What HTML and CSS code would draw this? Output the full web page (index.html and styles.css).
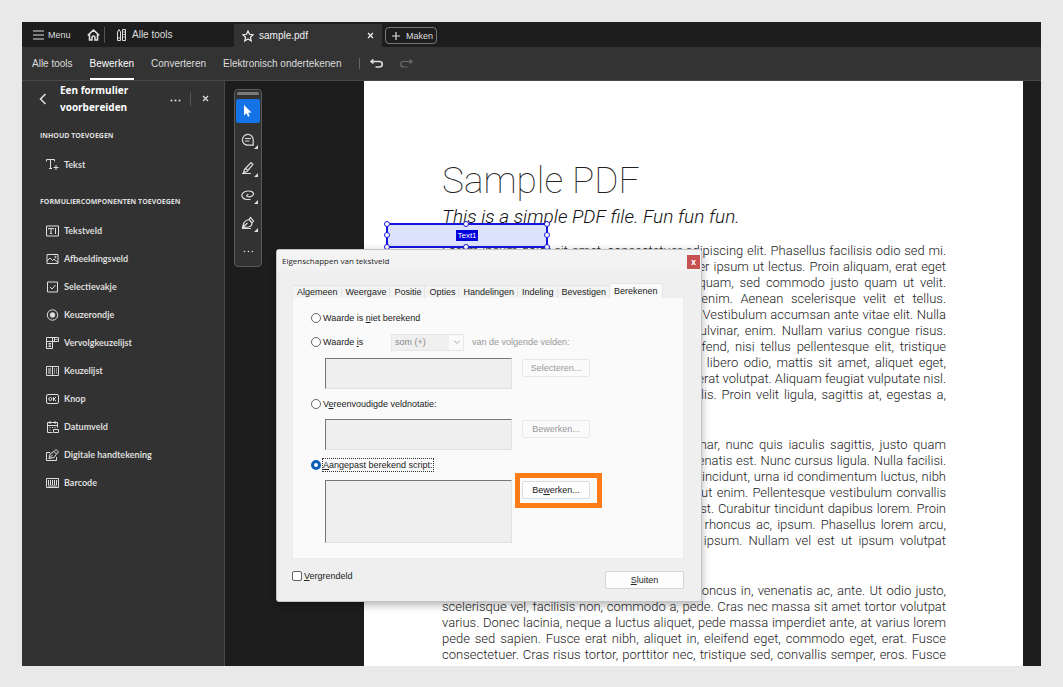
FILE: index.html
```
<!DOCTYPE html>
<html lang="nl">
    <head>
        <meta charset="utf-8">
        <title>sample.pdf</title>
        <meta name="viewport" content="width=device-width, initial-scale=1">
        <link rel="stylesheet" href="styles.css">
    </head>
    <body>
        <div class="app">
            <header class="tabs">
                <button class="menu" type="button">
                    <svg class="icon" width="11" height="10" viewBox="0 0 11 10"><path d="M0 1h11M0 5h11M0 9h11"/></svg>
                    Menu
                </button>
                <button class="home" type="button" aria-label="Start">
                    <svg class="icon bold" width="13" height="12" viewBox="0 0 13 12"><path d="M.8 6.300 6.500 1l5.700 5.300M2.500 5.500v5.500h2.500V8.500a1.500 1.500 0 0 1 3 0V11h2.500V5.500"/></svg>
                </button>
                <a class="all-tools" href="#">
                    <svg class="icon thin" width="9" height="12" viewBox="0 0 9 12"><path d="M2 .5 3.500 3v8.500h-3V3zM.5 9h3M5.500.5h3v11h-3zM6.500 3h2M6.500 5.500h2M6.500 8h2"/></svg>
                    Alle tools
                </a>
                <div class="file-tab">
                    <svg class="icon" width="12" height="12" viewBox="0 0 12 12"><path d="m6 1 1.500 3.300 3.700.4-2.800 2.500.8 3.700L6 9l-3.200 1.900.8-3.700L.8 4.700l3.700-.4z"/></svg>
                    <span>sample.pdf</span>
                    <button type="button" aria-label="Tabblad sluiten"><svg class="icon" width="7" height="7" viewBox="0 0 7 7"><path d="m1 1 5 5M6 1 1 6"/></svg></button>
                </div>
                <button class="create" type="button">
                    <svg class="icon" width="8" height="8" viewBox="0 0 8 8"><path d="M4 0v8M0 4h8"/></svg>
                    Maken
                </button>
            </header>
            <nav class="toolbar">
                <a href="#">Alle tools</a>
                <a href="#" class="active">Bewerken</a>
                <a href="#">Converteren</a>
                <a href="#">Elektronisch ondertekenen</a>
                <div class="history">
                    <button type="button" aria-label="Ongedaan maken"><svg class="icon bold" width="13" height="9" viewBox="0 0 13 9"><path d="M3.500.5 1 2.500l2.500 2M1 2.500h8.500a2.500 2.500 0 0 1 0 5.500H5.500"/></svg></button>
                    <button type="button" aria-label="Opnieuw" disabled><svg class="icon" width="13" height="9" viewBox="0 0 13 9"><path d="m9.500.5 2.500 2-2.500 2M12 2.500H3.500a2.500 2.500 0 0 0 0 5.500h4"/></svg></button>
                </div>
            </nav>
            <div class="workspace">
                <aside class="sidebar">
                    <div class="sidebar-head">
                        <button type="button" aria-label="Terug"><svg class="icon bold" width="8" height="12" viewBox="0 0 8 12"><path d="M6.500 1 1.500 6l5 5"/></svg></button>
                        <h2>Een formulier voorbereiden</h2>
                        <button class="more" type="button" aria-label="Meer"><svg class="dots" width="11" height="3" viewBox="0 0 11 3"><circle cx="1.500" cy="1.500" r="1"/><circle cx="5.500" cy="1.500" r="1"/><circle cx="9.500" cy="1.500" r="1"/></svg></button>
                        <button class="close" type="button" aria-label="Sluiten"><svg class="icon" width="7" height="7" viewBox="0 0 7 7"><path d="m1 1 5 5M6 1 1 6"/></svg></button>
                    </div>
                    <h3>INHOUD TOEVOEGEN</h3>
                    <ul>
                        <li><a href="#"><svg class="icon thin" width="13" height="12" viewBox="0 0 13 12"><path d="M.5 2.500v-2h8v2M4.500.5v9M3 9.500h3M7.500 8.500h5M10 6v5"/></svg>Tekst</a></li>
                    </ul>
                    <h3>FORMULIERCOMPONENTEN TOEVOEGEN</h3>
                    <ul>
                        <li><a href="#"><svg class="icon thin" width="13" height="12" viewBox="0 0 13 12"><path d="M.5 1h12v10H.5zM2.500 4.500V3.500h5v1M5 3.500v5M4 8.500h2M9.500 3v6"/></svg>Tekstveld</a></li>
                        <li><a href="#"><svg class="icon thin" width="13" height="12" viewBox="0 0 13 12"><path d="M1 1.500h11v9H1zM1 8l3-3 2.500 2.500L8 6l4 3.500"/><circle cx="9.500" cy="4" r=".7"/></svg>Afbeeldingsveld</a></li>
                        <li><a href="#"><svg class="icon thin" width="13" height="12" viewBox="0 0 13 12"><path d="M1.500 1h10v10h-10zM4 6l2 2 3.500-4"/></svg>Selectievakje</a></li>
                        <li><a href="#"><svg class="icon thin" width="13" height="12" viewBox="0 0 13 12"><circle cx="6.500" cy="6" r="5.200"/><circle class="solid" cx="6.500" cy="6" r="2.300"/></svg>Keuzerondje</a></li>
                        <li><a href="#"><svg class="icon thin" width="13" height="12" viewBox="0 0 13 12"><path d="M.5.500h12v4H.5zM.5 4.500v7h6v-11M8.500.5v4M9.500 2l1 1 1-1M2.500 6.500h2.500M2.500 8h2.500M2.500 9.500h2.500"/></svg>Vervolgkeuzelijst</a></li>
                        <li><a href="#"><svg class="icon thin" width="13" height="12" viewBox="0 0 13 12"><path d="M.5 1.500h12v9H.5zM6.500 1.500v9M2 4h3M2 6h3M2 8h3M8 4h1M10 4h1M8 6h1M10 6h1M8 8h1M10 8h1"/></svg>Keuzelijst</a></li>
                        <li><a href="#"><svg class="icon thin" width="13" height="12" viewBox="0 0 13 12"><rect x=".5" y="1.500" width="12" height="9" rx="1.500"/><circle cx="4.300" cy="6" r="1.500"/><path d="M7.500 4v4M10 4 7.800 6 10 8"/></svg>Knop</a></li>
                        <li><a href="#"><svg class="icon thin" width="13" height="12" viewBox="0 0 13 12"><path d="M6.500 11.500h-5v-10h10v5M1.500 4.500h10M4 0v3M9 0v3M3.500 6.500h1M6 6.500h1M8.500 6.500h1M3.500 9h1M7.500 8.500h5v3h-5z"/></svg>Datumveld</a></li>
                        <li><a href="#"><svg class="icon thin" width="13" height="12" viewBox="0 0 13 12"><path d="M4 3.500H.5v8h10V8M3 9.500l1-4.500 4-2.500 2.500 2.500L8 8.500zM3 9.500l3.500-3.500M8 2.500 10 .5l2.500 2.500-2 2"/></svg>Digitale handtekening</a></li>
                        <li><a href="#"><svg class="icon thin" width="13" height="12" viewBox="0 0 13 12"><path d="M.5 1.500h12v9H.5zM2.500 3v5M4.500 3v5M6.500 3v5M8.500 3v5M10.500 3v5M2 9h9"/></svg>Barcode</a></li>
                    </ul>
                </aside>
                <main class="canvas">
                    <div class="quick-tools">
                        <span class="grip"></span>
                        <button type="button" class="selected" aria-label="Selecteren"><svg width="14" height="14" viewBox="0 0 14 14"><path fill="#fff" d="M3 1v10.500l2.500-2.200 1.500 3.500 1.700-.8-1.500-3.300 3.300-.3z"/></svg></button>
                        <button type="button" class="group" aria-label="Opmerking"><svg class="icon" width="14" height="14" viewBox="0 0 14 14"><path d="M12.200 12.200H7a5.400 5.400 0 1 1 5.200-5.400zM4 5.500h6M4 8h4.500"/></svg></button>
                        <button type="button" class="group" aria-label="Markeren"><svg class="icon" width="14" height="14" viewBox="0 0 14 14"><path d="m3.500 8.500 6.500-7 2 1.800-6 7.200-3.500 1zM4.500 7.500l2.500 2M1 12.500h9"/></svg></button>
                        <button type="button" class="group" aria-label="Tekenen"><svg class="icon" width="14" height="14" viewBox="0 0 14 14"><path d="M9.500 11.500H6C1.500 11.500-.5 7.500 2 4.800c2.500-2.500 9-2.300 10.300.2 1.200 2.600-2.800 4.200-5.300 3.700-2-.5-1.500-2.200.5-2.200"/></svg></button>
                        <button type="button" class="group" aria-label="Ondertekenen"><svg class="icon" width="14" height="14" viewBox="0 0 14 14"><path d="M1.500 11.500 3 6.500C4.500 4.500 6 4 8 3.500L11 7c0 2-1.500 3.500-3.500 4zM1.500 11.500 6.500 7M8 3.500 9.500 1.500l3 3.500L11 7M1 12.500h9"/></svg></button>
                        <button type="button" aria-label="Meer"><svg class="dots" width="11" height="3" viewBox="0 0 11 3"><circle cx="1.500" cy="1.500" r=".8"/><circle cx="5.500" cy="1.500" r=".8"/><circle cx="9.500" cy="1.500" r=".8"/></svg></button>
                    </div>
                    <article class="page">
                        <h1>Sample PDF</h1>
                        <p class="subtitle">This is a simple PDF file. Fun fun fun.</p>
                        <p>
                            <span>Lorem ipsum dolor sit amet, consectetuer adipiscing elit. Phasellus facilisis odio sed mi.</span>
                            <span>Curabitur suscipit. Nulla vel nisi. Etiam semper ipsum ut lectus. Proin aliquam, erat eget</span>
                            <span>pharetra commodo, eros mi condimentum quam, sed commodo justo quam ut velit.</span>
                            <span>Integer a erat. Cras laoreet ligula cursus enim. Aenean scelerisque velit et tellus.</span>
                            <span>Vestibulum dictum aliquet sem. Nulla facilisi. Vestibulum accumsan ante vitae elit. Nulla</span>
                            <span>erat dolor, blandit in, rutrum quis, semper pulvinar, enim. Nullam varius congue risus.</span>
                            <span>Vivamus sollicitudin, metus ut interdum eleifend, nisi tellus pellentesque elit, tristique</span>
                            <span>accumsan eros quam et risus. Suspendisse libero odio, mattis sit amet, aliquet eget,</span>
                            <span>hendrerit vel, nulla. Sed vitae augue. Aliquam erat volutpat. Aliquam feugiat vulputate nisl.</span>
                            <span>Suspendisse nulla pretium ante pretium mollis. Proin velit ligula, sagittis at, egestas a,</span>
                            <span class="last">pulvinar quis, nisl.</span>
                        </p>
                        <p>
                            <span>Pellentesque sit amet lectus. Praesent pulvinar, nunc quis iaculis sagittis, justo quam</span>
                            <span>lobortis tortor, sed vestibulum dui metus venenatis est. Nunc cursus ligula. Nulla facilisi.</span>
                            <span>Phasellus ullamcorper consectetur est. Duis tincidunt, urna id condimentum luctus, nibh</span>
                            <span>ante vulputate sapien, id sagittis massa orci ut enim. Pellentesque vestibulum convallis</span>
                            <span>sem. Nulla consequat quam ut nisl. Nullam est. Curabitur tincidunt dapibus lorem. Proin</span>
                            <span>velit turpis, scelerisque sit amet, iaculis nec, rhoncus ac, ipsum. Phasellus lorem arcu,</span>
                            <span>feugiat eu, gravida eu, consequat molestie, ipsum. Nullam vel est ut ipsum volutpat</span>
                            <span class="last">feugiat. Aenean pellentesque.</span>
                        </p>
                        <p>
                            <span>In mauris. Pellentesque dui nisi, iaculis eu, rhoncus in, venenatis ac, ante. Ut odio justo,</span>
                            <span>scelerisque vel, facilisis non, commodo a, pede. Cras nec massa sit amet tortor volutpat</span>
                            <span>varius. Donec lacinia, neque a luctus aliquet, pede massa imperdiet ante, at varius lorem</span>
                            <span>pede sed sapien. Fusce erat nibh, aliquet in, eleifend eget, commodo eget, erat. Fusce</span>
                            <span>consectetuer. Cras risus tortor, porttitor nec, tristique sed, convallis semper, eros. Fusce</span>
                        </p>
                        <div class="field">
                            <span class="field-name">Text1</span>
                            <i class="handle nw"></i><i class="handle n"></i><i class="handle ne"></i>
                            <i class="handle w"></i><i class="handle e"></i>
                            <i class="handle sw"></i><i class="handle s"></i><i class="handle se"></i>
                        </div>
                    </article>
                </main>
            </div>

            <form class="dialog" action="#">
                <div class="dialog-title">
                    <span>Eigenschappen van tekstveld</span>
                    <button type="button">x</button>
                </div>
                <div class="dialog-tabs">
                    <button type="button">Algemeen</button>
                    <button type="button">Weergave</button>
                    <button type="button">Positie</button>
                    <button type="button">Opties</button>
                    <button type="button">Handelingen</button>
                    <button type="button">Indeling</button>
                    <button type="button">Bevestigen</button>
                    <button type="button" class="active">Berekenen</button>
                </div>
                <div class="panel">
                    <label class="option"><input type="radio" name="calc"><span>Waarde is <u>n</u>iet berekend</span></label>
                    <div class="sum">
                        <label class="option"><input type="radio" name="calc"><span>Waarde <u>i</u>s</span></label>
                        <div class="select">
                            <select id="operation" disabled><option>som (+)</option></select>
                            <svg width="8" height="5" viewBox="0 0 8 5"><path d="m1 .5 3 3 3-3"/></svg>
                        </div>
                        <label for="operation">van de volgende velden:</label>
                    </div>
                    <div class="entry">
                        <textarea aria-label="Velden" disabled></textarea>
                        <button type="button" disabled>Selecteren...</button>
                    </div>
                    <label class="option"><input type="radio" name="calc"><span>V<u>e</u>reenvoudigde veldnotatie:</span></label>
                    <div class="entry">
                        <textarea aria-label="Veldnotatie" disabled></textarea>
                        <button type="button" disabled>Bewerken...</button>
                    </div>
                    <label class="option focused"><input type="radio" name="calc" checked><span><u>A</u>angepast berekend script:</span></label>
                    <div class="entry script">
                        <textarea aria-label="Script" readonly></textarea>
                        <div class="highlight"><button type="button">Be<u>w</u>erken...</button></div>
                    </div>
                </div>
                <div class="dialog-foot">
                    <label class="option"><input type="checkbox"><span><u>V</u>ergrendeld</span></label>
                    <button type="button"><u>S</u>luiten</button>
                </div>
            </form>
        </div>
    </body>
</html>
```
FILE: styles.css
```
* {
    box-sizing: border-box;
    margin: 0;
    padding: 0;
}
body {
    display: flex;
    height: 100vh;
    padding: 22px 22px 21px;
    background: #e9e9e9;
    font: 10px/14px "Liberation Sans", Arial, sans-serif;
}
button, select, textarea {
    border: none;
    background: none;
    color: inherit;
    font: inherit;
}
a {
    color: inherit;
    text-decoration: none;
}
ul {
    list-style: none;
}
.icon {
    display: block;
    flex: none;
    fill: none;
    stroke: currentColor;
    stroke-width: 1.2;
}
.thin {
    stroke-width: 1;
}
.bold {
    stroke-width: 1.6;
}
.solid, .dots {
    fill: currentColor;
}
.app {
    position: relative;
    display: flex;
    flex: 1;
    flex-direction: column;
    min-width: 0;
    background: #1d1d1d;
    color: #dedede;
}

/* Tabs */
.tabs {
    display: flex;
    flex: none;
    align-items: center;
    height: 25px;
    padding-left: 11px;
}
.tabs button, .all-tools {
    display: flex;
    align-items: center;
}
.menu {
    gap: 4px;
    width: 54px;
    font-size: 9px;
}
.home {
    width: 18px;
    height: 16px;
    border-right: 1px solid #555 !important;
}
.all-tools {
    gap: 6px;
    width: 129px;
    padding-left: 12px;
}
.file-tab {
    display: flex;
    align-items: center;
    gap: 5px;
    width: 148px;
    height: 23px;
    margin-top: 2px;
    padding: 0 8px;
    background: #333;
    color: #f2f2f2;
}
.file-tab span {
    flex: 1;
}
.create {
    gap: 6px;
    width: 52px;
    height: 17px;
    margin: 2px 0 0 3px;
    padding: 0 6px;
    border: 1px solid #777 !important;
    border-radius: 4px;
    font-size: 9px;
}

/* Toolbar */
.toolbar {
    display: flex;
    flex: none;
    gap: 17px;
    height: 34px;
    padding-left: 10px;
    border-bottom: 1px solid #484848;
    background: #333;
    line-height: 33px;
}
.toolbar .active {
    border-bottom: 2px solid #fff;
    color: #fff;
}
.history {
    display: flex;
    align-items: center;
    align-self: center;
    gap: 17px;
    height: 11px;
    padding-left: 10px;
    border-left: 1px solid #666;
}
.history button:disabled {
    color: #6e6e6e;
}

/* Sidebar */
.workspace {
    display: flex;
    flex: 1;
    min-height: 0;
}
.sidebar {
    flex: none;
    width: 203px;
    border-right: 1px solid #484848;
    background: #323232;
    font: 700 9px/14px Lato, "Open Sans", sans-serif;
}
.sidebar-head {
    display: flex;
    align-items: center;
    height: 35px;
    padding: 0 15px 0 17px;
}
.sidebar h2 {
    width: 110px;
    margin-left: 13px;
    color: #fff;
    font: 700 10px/17px "Open Sans", sans-serif;
}
.close {
    height: 14px;
    margin-left: 9px;
    padding-left: 11px;
    border-left: 1px solid #555 !important;
}
.sidebar h3 {
    margin: 13px 0 8px 18px;
    font: 700 7px/14px "Open Sans", sans-serif;
}
.sidebar ul + h3 {
    margin-top: 16px;
}
.sidebar ul {
    padding-left: 24px;
}
.sidebar li a {
    display: flex;
    align-items: center;
    gap: 5px;
    height: 28px;
}

/* Document */
.canvas {
    display: flex;
    align-items: flex-start;
    flex: 1;
    min-width: 0;
}
.quick-tools {
    display: flex;
    flex: none;
    flex-direction: column;
    width: 28px;
    height: 178px;
    margin: 8px 102px 0 9px;
    padding: 1px;
    border: 1px solid #5a5a5a;
    border-radius: 4px;
    background: #323232;
}
.grip {
    height: 3px;
    margin: 1px 1px 0;
    border-radius: 2px;
    background: #7a7a7a;
}
.quick-tools button {
    position: relative;
    display: flex;
    align-items: center;
    justify-content: center;
    height: 28px;
}
.quick-tools .selected {
    height: 24px;
    margin: 4px 0 3px;
    border-radius: 2px;
    background: #1473e6;
}
.group::after {
    content: "";
    position: absolute;
    right: 2px;
    bottom: 5px;
    border: 2px solid transparent;
    border-right-color: #dedede;
    border-bottom-color: #dedede;
}
.page {
    position: relative;
    flex: 1;
    align-self: stretch;
    min-width: 0;
    margin-right: 18px;
    padding: 76px 77px 0 78px;
    overflow: hidden;
    background: #fff;
    color: #222;
    font: 300 13px/16px Roboto, "Liberation Sans", sans-serif;
}
.page h1 {
    color: #222;
    font-size: 37px;
    font-weight: 100;
    line-height: 48px;
}
.page p {
    margin-bottom: 18px;
}
.page .subtitle {
    margin-bottom: 14px;
    color: #111;
    font-size: 19px;
    font-style: italic;
    line-height: 24px;
}
.page p span {
    display: block;
    white-space: nowrap;
    text-align-last: justify;
}
.page p .last {
    text-align-last: left;
}
.field {
    position: absolute;
    top: 142px;
    left: 22px;
    display: flex;
    align-items: center;
    justify-content: center;
    width: 162px;
    height: 25px;
    border: 2px solid #1414dc;
    background: #dce2fc;
}
.field-name {
    padding: 0 1px;
    background: #0000dc;
    color: #fff;
    font: 8px/11px "Liberation Sans", Arial, sans-serif;
}
.handle {
    position: absolute;
    width: 6px;
    height: 6px;
    margin: -4px;
    border: 1px solid #1414dc;
    border-radius: 50%;
    background: #fff;
}
.nw, .n, .ne {
    top: 0;
}
.w, .e {
    top: 50%;
}
.sw, .s, .se {
    bottom: 0;
}
.nw, .w, .sw {
    left: 0;
}
.n, .s {
    left: 50%;
}
.ne, .e, .se {
    right: 0;
}

/* Dialog */
.dialog {
    position: absolute;
    top: 227px;
    left: 254px;
    width: 426px;
    border: 1px solid #c4c4c4;
    border-radius: 3px;
    background: #efefef;
    box-shadow: 0 3px 8px rgba(0, 0, 0, .3);
    color: #222;
    font-size: 9px;
    line-height: 12px;
}
.dialog-title {
    display: flex;
    align-items: center;
    justify-content: space-between;
    height: 21px;
    padding-left: 5px;
    background: #f3f3f3;
    font: 8px/12px "Open Sans", sans-serif;
}
.dialog-title button {
    align-self: flex-end;
    width: 13px;
    height: 14px;
    margin: 0 1px 2px 0;
    background: #c75050;
    color: #fff;
    font-weight: 700;
}
.dialog-tabs {
    display: flex;
    align-items: flex-end;
    height: 27px;
    padding-left: 16px;
}
.dialog-tabs button {
    height: 13px;
    padding: 0 3px 0 4px;
    border: 1px solid #e4e4e4;
    border-width: 1px 1px 0 0;
    background: #f3f3f3;
}
.dialog-tabs .active {
    height: 15px;
    padding: 0 4px;
    background: #fafafa;
}
.panel {
    display: flex;
    flex-direction: column;
    gap: 7px;
    margin: 0 17px 0 15px;
    padding: 12px 18px 15px;
    border: 1px solid #ececec;
    border-top: none;
    background: #fafafa;
}
.option {
    display: flex;
    align-items: center;
    gap: 2px;
    height: 16px;
}
.option input {
    appearance: none;
    width: 10px;
    height: 10px;
    border: 1px solid #666;
    border-radius: 50%;
    background: #fff;
}
.option input:checked {
    border: 3px solid #0a5fb4;
}
.option input[type=checkbox] {
    border-radius: 2px;
}
.focused span {
    outline: 1px dotted #333;
}
.sum {
    display: flex;
    align-items: center;
    height: 18px;
    color: #999;
}
.sum .option {
    width: 80px;
    color: #222;
}
.select {
    position: relative;
    margin-right: 8px;
}
.select select {
    display: block;
    appearance: none;
    width: 73px;
    height: 17px;
    padding-left: 3px;
    border: 1px solid #e6e6e6;
    background: linear-gradient(90deg, #f0f0f0 57px, #fafafa 57px);
    color: #888;
    opacity: 1;
}
.select svg {
    position: absolute;
    top: 6px;
    right: 3px;
    fill: none;
    stroke: #aaa;
}
.entry {
    display: flex;
    align-items: flex-start;
    gap: 10px;
    height: 31px;
    padding-left: 14px;
}
.entry.script {
    height: 63px;
}
.entry textarea {
    width: 187px;
    height: 100%;
    border: 1px solid #e2e2e2;
    border-top: 1px solid #777;
    border-left: 1px solid #777;
    background: #efefef;
    resize: none;
}
.entry button {
    display: block;
    width: 68px;
    height: 18px;
    margin-top: 1px;
    border: 1px solid #ddd;
    border-radius: 2px;
    background: #fdfdfd;
}
.entry button:disabled {
    border-color: #e8e8e8;
    background: #fafafa;
    color: #999;
}
.highlight {
    position: relative;
}
.highlight::after {
    content: "";
    position: absolute;
    top: -7px;
    right: -12px;
    bottom: -9px;
    left: -7px;
    border: 5px solid #ff7b16;
    pointer-events: none;
}
.dialog-foot {
    display: flex;
    align-items: flex-start;
    justify-content: space-between;
    padding: 9px 17px 12px 15px;
}
.dialog-foot button {
    width: 79px;
    height: 18px;
    margin-top: 3px;
    border: 1px solid #d4d4d4;
    border-radius: 2px;
    background: #fdfdfd;
}
```
